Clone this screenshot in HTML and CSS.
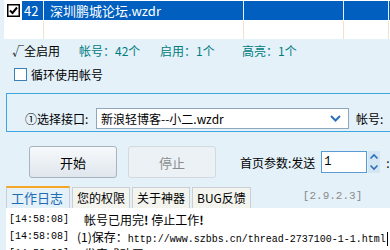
FILE: index.html
```html
<!DOCTYPE html>
<html lang="zh-CN">
<head>
    <meta charset="UTF-8">
    <title>发帖神器</title>
    <link rel="stylesheet" href="styles.css">
</head>
<body>

<div class="list">
    <div class="row sel">
        <div class="cell c0">
            <svg class="chk" width="13" height="13" viewBox="0 0 13 13">
                <rect x="0" y="0" width="13" height="13" fill="#000"/>
                <rect x="1.5" y="1.5" width="10" height="10" fill="#fff"/>
                <path d="M3 6.5 L5.5 9 L10 3.5" stroke="#000" stroke-width="2" fill="none"/>
            </svg>
        </div>
        <div class="cell c1">42</div>
        <div class="cell c2">深圳鹏城论坛.wzdr</div>
        <div class="cell c3"></div>
        <div class="cell c4"></div>
        <div class="cell c5"></div>
    </div>
    <div class="row">
        <div class="cell c0"></div>
        <div class="cell c1"></div>
        <div class="cell c2"></div>
        <div class="cell c3"></div>
        <div class="cell c4"></div>
        <div class="cell c5"></div>
    </div>
</div>

<div class="stats">
    <span class="all">√全启用</span>
    <span class="st s1">帐号：42个</span>
    <span class="st s2">启用：1个</span>
    <span class="st">高亮：1个</span>
</div>

<label class="loop">
    <span class="box"></span>循环使用帐号
</label>

<div class="group">
    <span class="lbl">①选择接口:</span>
    <div class="select">
        <span>新浪轻博客--小二.wzdr</span>
        <svg width="11" height="7" viewBox="0 0 11 7"><path d="M1 1 L5.5 5.5 L10 1" stroke="#2B6FB8" stroke-width="2" fill="none"/></svg>
    </div>
    <span class="lbl acc">帐号:</span>
</div>

<div class="actions">
    <button class="btn">开始</button>
    <button class="btn off">停止</button>
    <span class="param">首页参数:发送</span>
    <div class="num">
        <span class="val">1</span>
    </div>
    <div class="spin">
        <svg width="12" height="11" viewBox="0 0 12 11"><path d="M2.5 7.5 L6 4 L9.5 7.5" stroke="#2B6FB8" stroke-width="1.6" fill="none"/></svg>
        <svg width="12" height="11" viewBox="0 0 12 11"><path d="M2.5 3.5 L6 7 L9.5 3.5" stroke="#2B6FB8" stroke-width="1.6" fill="none"/></svg>
    </div>
    <span class="tail">:</span>
</div>

<div class="tabs">
    <span class="tab active">工作日志</span>
    <span class="tab">您的权限</span>
    <span class="tab">关于神器</span>
    <span class="tab">BUG反馈</span>
    <span class="ver">[2.9.2.3]</span>
</div>

<div class="log">
    <div class="line"><span class="time">[14:58:08]</span><span class="msg m1">帐号已用完<b>!</b> 停止工作<b>!</b></span></div>
    <div class="line"><span class="time">[14:58:08]</span><span class="msg m2">(1)保存：<span class="url">http://www.szbbs.cn/thread-2737100-1-1.html</span><span class="caret"></span></span></div>
    <div class="line"><span class="time">[14:58:08]</span><span class="msg m1">发表成功了</span></div>
</div>

</body>
</html>
```

FILE: styles.css
```css
body {
    margin: 0;
    background: #e4f1f9;
    font-family: "Noto Sans CJK SC", "Liberation Sans", sans-serif;
    font-size: 12px;
    color: #000;
    width: 390px;
    height: 250px;
    overflow: hidden;
}
.list {
    margin-left: 4px;
    background: #fff;
    height: 39px;
}
.row {
    display: flex;
    height: 18px;
}
.row.sel {
    height: 19px;
    border-top: 1px solid #fff;
    margin-bottom: 1px;
}
.cell {
    box-sizing: border-box;
    border-right: 1px solid #ede3cf;
    line-height: 19px;
    white-space: nowrap;
}
.c0 { width: 18px; border-right: none; }
.c1 { width: 22px; padding-left: 2px; }
.c2 { width: 200px; padding-left: 6px; }
.c3 { width: 100px; }
.c4 { width: 45px; }
.c5 { flex: 1; border-right: none; }
.sel .cell {
    background: #005fbf;
    color: #fff;
    border-right-color: #e8eef6;
    font-size: 13px;
}
.sel .c0 {
    background: #fff;
    padding: 3px 0 0 3px;
}
.chk { display: block; }
.stats {
    display: flex;
    height: 22px;
    line-height: 22px;
    margin-top: 1px;
    color: #007c80;
}
.all {
    color: #000;
    margin-left: 12px;
    width: 67px;
}
.s1 { width: 81px; }
.s2 { width: 82px; }
.loop {
    display: flex;
    align-items: center;
    height: 22px;
    margin-top: 1px;
    padding-left: 14px;
}
.box {
    width: 11px;
    height: 11px;
    border: 1px solid #3b7fb4;
    background: #fff;
    margin-right: 4px;
}
.group {
    margin: 8px 0 0 6px;
    height: 37px;
    border: 1px solid #3ba6df;
    border-right: none;
    display: flex;
    align-items: flex-end;
    padding-bottom: 2px;
    box-sizing: border-box;
    height: 39px;
}
.lbl {
    line-height: 21px;
    white-space: nowrap;
}
.group .lbl:first-child {
    margin-left: 18px;
    width: 71px;
}
.select {
    width: 253px;
    height: 21px;
    box-sizing: border-box;
    border: 1px solid #8ea7be;
    background: #fff;
    display: flex;
    align-items: center;
    justify-content: space-between;
    padding: 0 7px 0 4px;
    margin-right: 7px;
}
.actions {
    display: flex;
    align-items: center;
    margin-top: 14px;
    height: 32px;
}
.btn {
    font-family: inherit;
    font-size: 13px;
    width: 88px;
    height: 32px;
    border: 1px solid #a8b4bf;
    border-radius: 3px;
    background: linear-gradient(#f7f9fb, #dfe6ec);
    color: #000;
    margin-left: 29px;
    padding: 0;
}
.btn.off {
    margin-left: 11px;
    border-color: #d2dae0;
    background: #ebf1f5;
    color: #8c8c8c;
}
.param {
    margin-left: 24px;
    white-space: nowrap;
}
.num {
    width: 46px;
    height: 22px;
    box-sizing: border-box;
    border: 1px solid #5a9bd5;
    background: #fff;
    margin-left: 6px;
    padding-left: 2px;
    line-height: 20px;
    font-family: "Liberation Mono", monospace;
}
.spin {
    display: flex;
    flex-direction: column;
    background: #d5e6f3;
    margin-left: 1px;
    width: 12px;
}
.spin svg { display: block; }
.tail { margin-left: 6px; }
.tabs {
    display: flex;
    align-items: flex-end;
    margin: 8px 0 0 6px;
    height: 22px;
}
.tab {
    height: 20px;
    line-height: 20px;
    padding: 0 4px;
    margin-right: 2px;
    border: 1px solid #c9cfd4;
    border-bottom: none;
    background: #f4f4ef;
    white-space: nowrap;
}
.tab.active {
    height: 20px;
    border-top: 2px solid #f5a623;
    background: #e4f1f9;
    color: #1e6cb4;
    font-size: 13px;
    width: 54px;
}
.ver {
    margin: 0 0 3px 50px;
    color: #8a8a8a;
    font-family: "Liberation Mono", monospace;
    font-size: 11px;
    align-self: center;
}
.log {
    margin-left: 6px;
    background: #fff;
    height: 45px;
    padding-top: 3px;
    font-family: "Liberation Mono", "Noto Sans CJK SC", monospace;
}
.line {
    display: flex;
    height: 17px;
    line-height: 17px;
    white-space: nowrap;
    font-size: 12px;
}
.time {
    margin-left: 3px;
    font-size: 10px;
    width: 59px;
}
.msg { font-family: "Noto Sans CJK SC", sans-serif; }
.m1 { margin-left: 16px; }
.m2 { margin-left: 9px; }
.msg b { font-weight: bold; }
.url {
    font-family: "Liberation Mono", monospace;
    font-size: 10px;
}
.caret {
    display: inline-block;
    width: 1px;
    height: 14px;
    background: #000;
    vertical-align: middle;
    margin-left: 1px;
}
```
